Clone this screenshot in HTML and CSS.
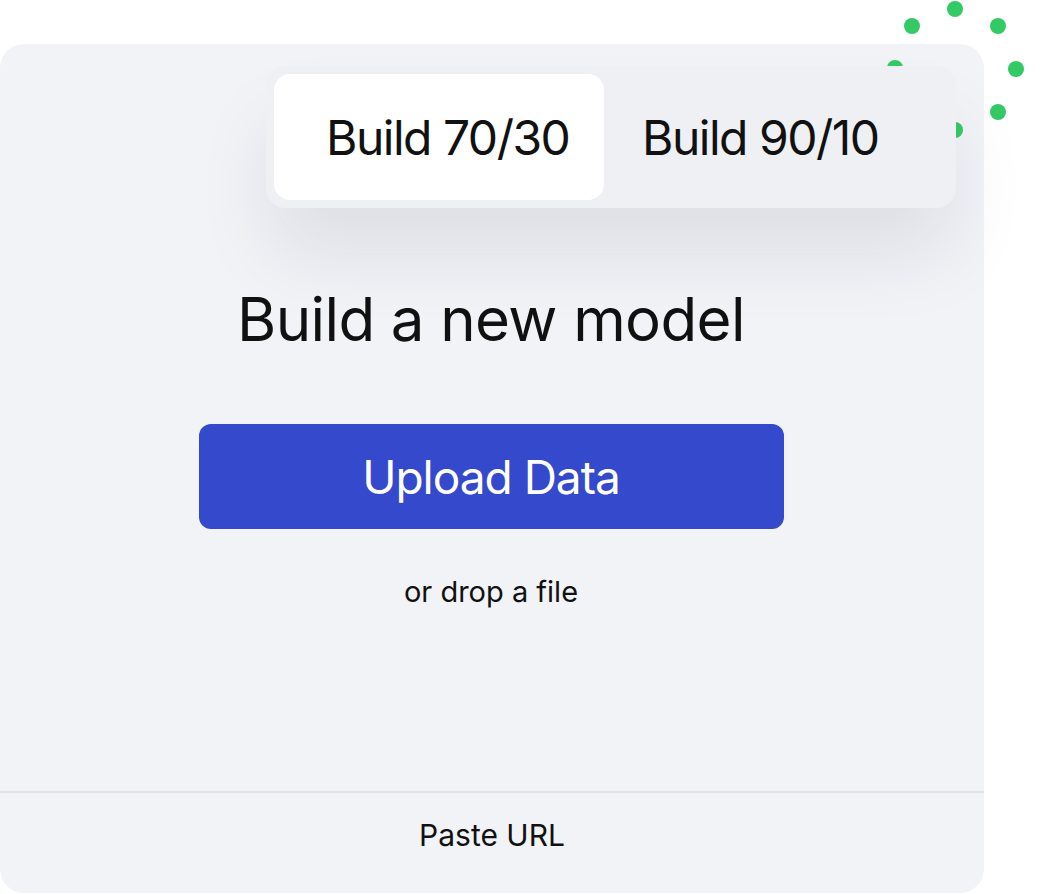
FILE: index.html
```html
<html>
	<head>
		<title>Build a new model</title>
		<link rel="stylesheet" href="styles.css">
	</head>
	<body>
		<div class="stage">
			<svg class="dots" width="160" height="150" viewBox="880 0 160 150">
				<circle cx="955" cy="9" r="8"/>
				<circle cx="998" cy="26" r="8"/>
				<circle cx="1016" cy="69" r="8"/>
				<circle cx="998" cy="112" r="8"/>
				<circle cx="955" cy="130" r="8"/>
				<circle cx="912" cy="112" r="8"/>
				<circle cx="895" cy="68" r="8"/>
				<circle cx="912" cy="26" r="8"/>
			</svg>
			<div class="card">
				<div class="tabs">
					<button class="tab active">Build 70/30</button>
					<button class="tab">Build 90/10</button>
				</div>
				<div class="builder">
					<h1>Build a new model</h1>
					<button class="upload">Upload Data</button>
					<p class="drop">or drop a file</p>
				</div>
				<div class="footer">Paste URL</div>
			</div>
		</div>
	</body>
</html>
```

FILE: styles.css
```css
body {
  margin: 0;
  background-color: #ffffff;
  font-family: Inter, "Noto Sans", sans-serif;
  color: #111111;
}

.stage {
  position: relative;
  width: 1056px;
  padding-top: 44px;
}

.dots {
  position: absolute;
  top: 0;
  left: 880px;
  z-index: 1;
  fill: #33c964;
}

div.card {
  width: 984px;
  height: 849px;
  border-radius: 24px;
  background-color: #f2f3f7;
  display: flex;
  flex-direction: column;
}

.tabs {
  position: relative;
  z-index: 2;
  align-self: flex-end;
  margin: 22px 28px 0 0;
  width: 690px;
  height: 142px;
  box-sizing: border-box;
  padding: 8px;
  display: flex;
  border-radius: 20px;
  background-color: #eff0f4;
  box-shadow: 0 50px 80px -5px rgba(20, 24, 60, 0.09);
}

.tab {
  border: none;
  background: none;
  font-family: inherit;
  font-size: 48px;
  color: #111111;
  padding: 0 0 0 38px;
  border-radius: 16px;
  letter-spacing: -1.5px;
  text-align: left;
}

.tab.active {
  width: 330px;
  padding-left: 52px;
  background-color: #ffffff;
}

.builder {
  flex: 1;
  display: flex;
  flex-direction: column;
  align-items: center;
  padding-right: 2px;
}

h1 {
  margin: 75px 0 0 0;
  font-size: 60px;
  line-height: 72px;
  font-weight: 400;
  letter-spacing: -0.6px;
}

.upload {
  margin-top: 69px;
  width: 585px;
  height: 105px;
  border: none;
  border-radius: 12px;
  background-color: #3449cc;
  color: #ffffff;
  font-family: inherit;
  font-size: 46px;
  letter-spacing: -1px;
}

p.drop {
  margin: 46px 0 0 0;
  font-size: 29px;
  line-height: 34px;
}

.footer {
  height: 102px;
  box-sizing: border-box;
  border-top: 2px solid #e2e3e7;
  padding-bottom: 16px;
  display: flex;
  align-items: center;
  justify-content: center;
  font-size: 30px;
}
```
